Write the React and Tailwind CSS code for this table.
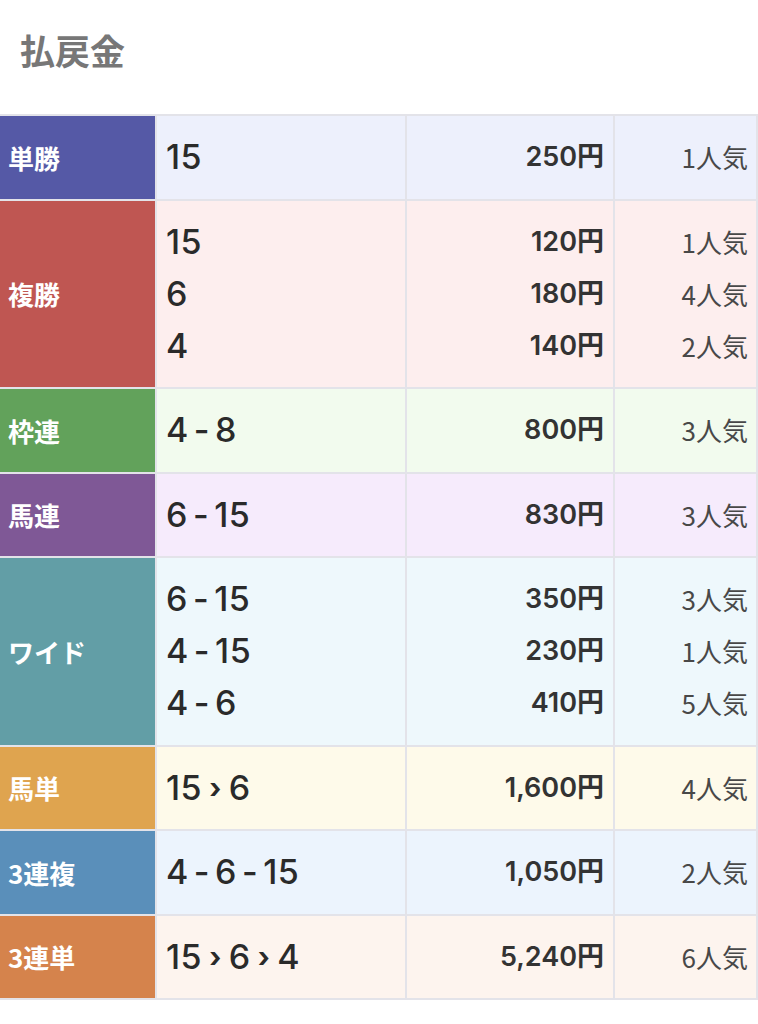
const rows = [
  { label: '単勝', color: 'bg-[#5559a6]', bg: 'bg-[#edf0fc]', items: [[['15'], '250円', '1人気']] },
  {
    label: '複勝',
    color: 'bg-[#bf5652]',
    bg: 'bg-[#fdeeee]',
    items: [
      [['15'], '120円', '1人気'],
      [['6'], '180円', '4人気'],
      [['4'], '140円', '2人気'],
    ],
  },
  { label: '枠連', color: 'bg-[#62a25b]', bg: 'bg-[#f2fbee]', items: [[['4', '-', '8'], '800円', '3人気']] },
  { label: '馬連', color: 'bg-[#7f5896]', bg: 'bg-[#f6ebfc]', items: [[['6', '-', '15'], '830円', '3人気']] },
  {
    label: 'ワイド',
    color: 'bg-[#629ea6]',
    bg: 'bg-[#eef8fc]',
    items: [
      [['6', '-', '15'], '350円', '3人気'],
      [['4', '-', '15'], '230円', '1人気'],
      [['4', '-', '6'], '410円', '5人気'],
    ],
  },
  { label: '馬単', color: 'bg-[#dfa44f]', bg: 'bg-[#fefaea]', items: [[['15', '›', '6'], '1,600円', '4人気']] },
  { label: '3連複', color: 'bg-[#5a8fba]', bg: 'bg-[#ecf4fd]', items: [[['4', '-', '6', '-', '15'], '1,050円', '2人気']] },
  { label: '3連単', color: 'bg-[#d5834c]', bg: 'bg-[#fdf4ee]', items: [[['15', '›', '6', '›', '4'], '5,240円', '6人気']] },
]

function Combo({ parts }) {
  return (
    <div className="flex items-center">
      {parts.map((p, i) =>
        p === '-' ? (
          <span key={i} className="mx-[5px]">-</span>
        ) : p === '›' ? (
          <span key={i} className="mx-[7px] text-[28px] font-bold">›</span>
        ) : (
          <span key={i}>{p}</span>
        )
      )}
    </div>
  )
}

export default function App() {
  return (
    <div
      className="w-[758px] bg-white"
      style={{ fontFamily: 'Inter, "Noto Sans CJK JP", sans-serif' }}
    >
      <div className="h-[114px] pl-5 pt-[28px]">
        <h2 className="text-[35px] leading-[44px] font-bold text-[#777]" style={{ fontFamily: '"Noto Sans CJK JP", sans-serif' }}>
          払戻金
        </h2>
      </div>
      <div className="flex flex-col gap-[2px] bg-[#e3e3e9] py-[2px] pr-[2px]">
        {rows.map((r) => (
          <div key={r.label} className="grid grid-cols-[155px_248px_206px_1fr] gap-[2px]">
            <div
              className={`${r.color} flex items-center pl-2 text-[26px] font-bold text-white`}
              style={{ fontFamily: '"Noto Sans CJK JP", sans-serif' }}
            >
              {r.label}
            </div>
            <div className={`${r.bg} py-[15.25px] pl-[9px] text-[34px] leading-[52px] font-medium tracking-[0.5px] text-[#2a2a2a]`}>
              {r.items.map((it, i) => (
                <Combo key={i} parts={it[0]} />
              ))}
            </div>
            <div className={`${r.bg} py-[15.25px] pr-[9px] text-right text-[27px] leading-[52px] font-semibold text-[#333]`}>
              {r.items.map((it, i) => (
                <div key={i}>{it[1]}</div>
              ))}
            </div>
            <div
              className={`${r.bg} py-[15.25px] pr-[8px] text-right text-[26px] leading-[52px] text-[#484848]`}
              style={{ fontFamily: '"Noto Sans CJK JP", sans-serif' }}
            >
              {r.items.map((it, i) => (
                <div key={i}>{it[2]}</div>
              ))}
            </div>
          </div>
        ))}
      </div>
    </div>
  )
}
